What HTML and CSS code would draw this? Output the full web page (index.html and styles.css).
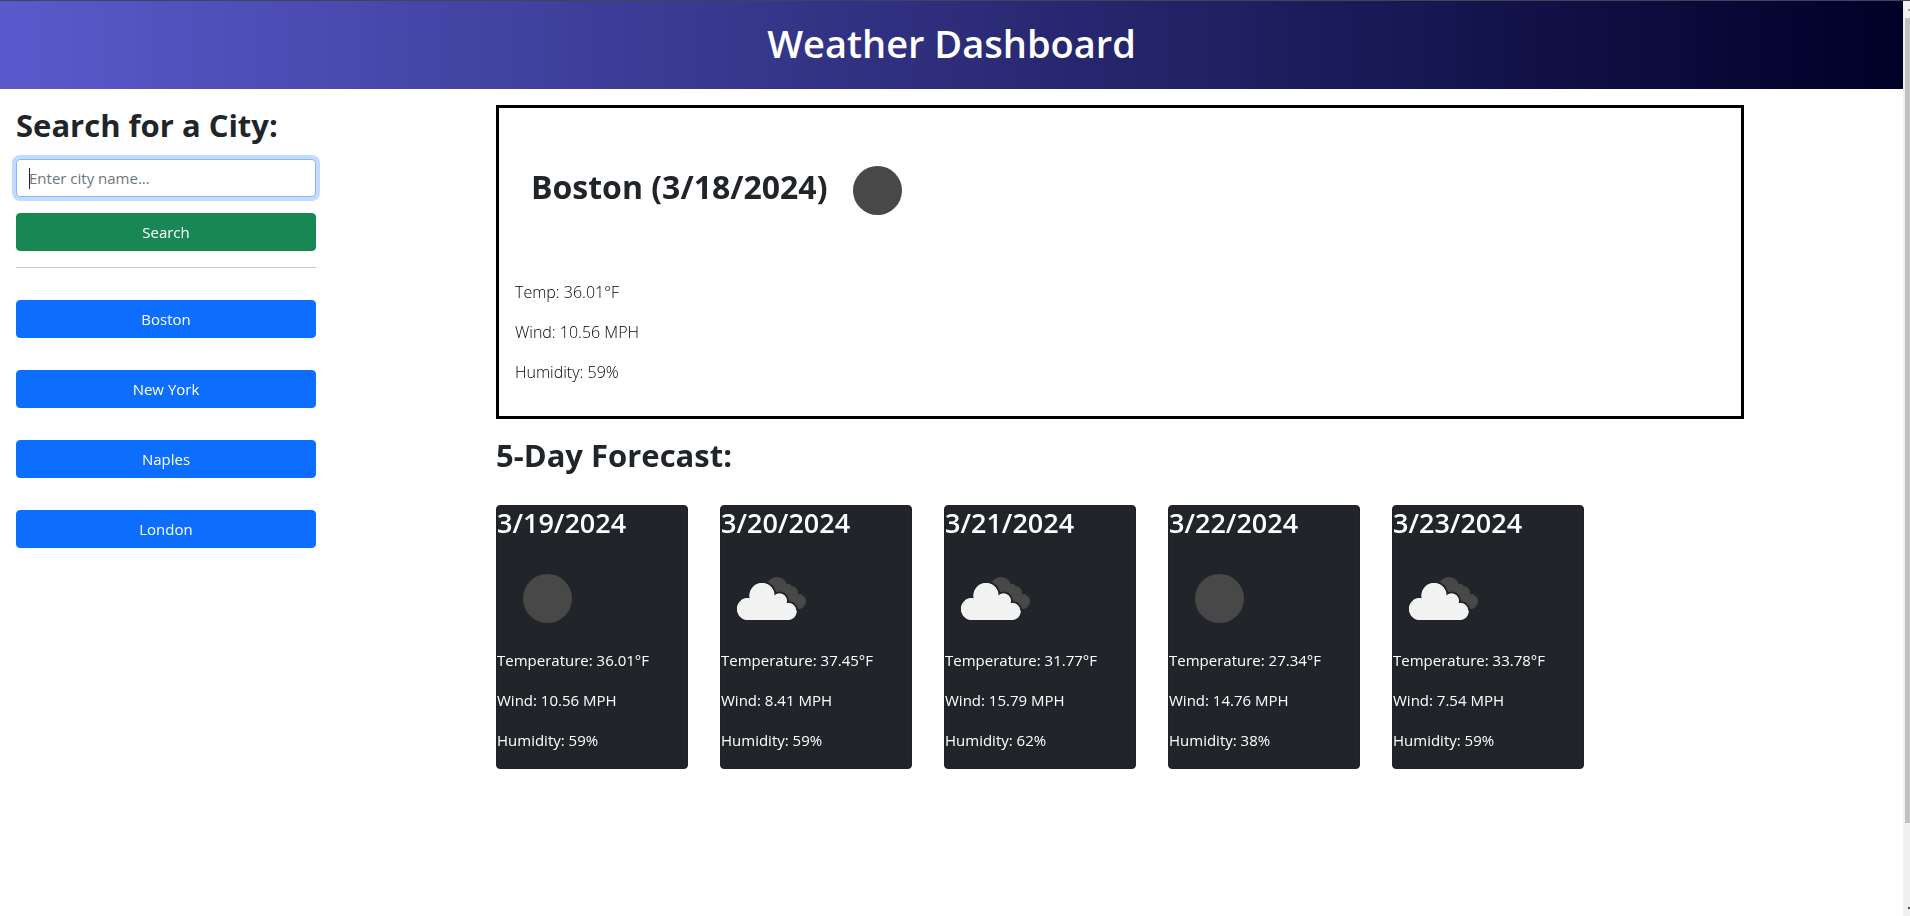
FILE: index.html
```html
<!DOCTYPE html>
<html lang="en">
<head>
<meta charset="utf-8">
<meta name="viewport" content="width=device-width, initial-scale=1">
<title>Weather Dashboard</title>
<link rel="stylesheet" href="styles.css">
</head>
<body>
<svg class="sprites" aria-hidden="true">
  <symbol id="clear-night" viewBox="0 0 100 100">
    <circle cx="50.500" cy="50.500" r="24.500" fill="#484849"/>
  </symbol>
  <symbol id="clouds" viewBox="0 0 100 100">
    <g fill="#484849">
      <circle cx="56" cy="39.500" r="10.500"/>
      <circle cx="70.500" cy="44.500" r="6.500"/>
      <circle cx="77.500" cy="53.500" r="7.500"/>
      <path d="M55 36h14l8 12-1 12.500H60z"/>
    </g>
    <g fill="#f2f2f2" stroke="#212529" stroke-width="2">
      <circle cx="27" cy="61" r="12"/>
      <circle cx="41" cy="47.500" r="13.500"/>
      <circle cx="58.500" cy="53" r="8.500"/>
      <circle cx="67" cy="63.500" r="9.500"/>
    </g>
    <g fill="#f2f2f2">
      <circle cx="27" cy="61" r="11"/>
      <circle cx="41" cy="47.500" r="12.500"/>
      <circle cx="58.500" cy="53" r="7.500"/>
      <circle cx="67" cy="63.500" r="8.500"/>
      <path d="M29.500 50l12-8 16 8 8 5 1.500 17H27z"/>
    </g>
  </symbol>
</svg>
<div class="window">
  <div class="page">
    <header class="banner"><h1>Weather Dashboard</h1></header>
    <div class="layout">
      <aside class="sidebar">
        <form class="search" action="#">
          <label class="heading" for="city">Search for a City:</label>
          <input id="city" class="field" type="text" placeholder="Enter city name..." autocomplete="off" autofocus>
          <button class="btn btn-search" type="submit">Search</button>
        </form>
        <hr class="rule">
        <div class="history">
          <button class="btn" type="button">Boston</button>
          <button class="btn" type="button">New York</button>
          <button class="btn" type="button">Naples</button>
          <button class="btn" type="button">London</button>
        </div>
      </aside>
      <main class="content">
        <section class="today">
          <div class="today-head">
            <h2 class="heading">Boston (3/18/2024)</h2>
            <svg class="icon" role="img" aria-label="Clear"><use href="#clear-night"/></svg>
          </div>
          <p>Temp: 36.01°F</p>
          <p>Wind: 10.56 MPH</p>
          <p>Humidity: 59%</p>
        </section>
        <h2 class="heading">5-Day Forecast:</h2>
        <div class="forecast">
          <article class="day">
            <h3>3/19/2024</h3>
            <svg class="icon" role="img" aria-label="Clear"><use href="#clear-night"/></svg>
            <p>Temperature: 36.01°F</p><p>Wind: 10.56 MPH</p><p>Humidity: 59%</p>
          </article>
          <article class="day">
            <h3>3/20/2024</h3>
            <svg class="icon" role="img" aria-label="Clouds"><use href="#clouds"/></svg>
            <p>Temperature: 37.45°F</p><p>Wind: 8.41 MPH</p><p>Humidity: 59%</p>
          </article>
          <article class="day">
            <h3>3/21/2024</h3>
            <svg class="icon" role="img" aria-label="Clouds"><use href="#clouds"/></svg>
            <p>Temperature: 31.77°F</p><p>Wind: 15.79 MPH</p><p>Humidity: 62%</p>
          </article>
          <article class="day">
            <h3>3/22/2024</h3>
            <svg class="icon" role="img" aria-label="Clear"><use href="#clear-night"/></svg>
            <p>Temperature: 27.34°F</p><p>Wind: 14.76 MPH</p><p>Humidity: 38%</p>
          </article>
          <article class="day">
            <h3>3/23/2024</h3>
            <svg class="icon" role="img" aria-label="Clouds"><use href="#clouds"/></svg>
            <p>Temperature: 33.78°F</p><p>Wind: 7.54 MPH</p><p>Humidity: 59%</p>
          </article>
        </div>
      </main>
    </div>
  </div>
  <div class="scroll-track" aria-hidden="true">
    <span class="arrow arrow-up"></span>
    <span class="thumb"></span>
    <span class="arrow arrow-down"></span>
  </div>
</div>
</body>
</html>
```
FILE: styles.css
```css
*, *::before, *::after { box-sizing: border-box; }

body {
  margin: 0;
  font: 400 15px/24px "Segoe UI", "Open Sans", "Noto Sans", sans-serif;
  color: #212529;
  background: #fff;
}

h1, h2, h3, p { margin: 0; }

.sprites { display: none; }

.window {
  display: flex;
  min-height: 100vh;
  border-top: 1px solid #42425a;
}

.page { flex: 1; min-width: 0; }

.banner {
  padding: 18px 16px 22px;
  text-align: center;
  color: #fff;
  background: linear-gradient(to right, #5a5acd, #000028);
}

.banner h1 {
  font-size: 38px;
  font-weight: 600;
  line-height: 48px;
}

.layout {
  display: flex;
  align-items: flex-start;
  gap: 180px;
  padding: 16px 159px 16px 16px;
}

.heading {
  padding-top: 2px;
  font-size: 31px;
  font-weight: 700;
  line-height: 36px;
}

.sidebar { flex: 0 0 300px; }

.search {
  display: flex;
  flex-direction: column;
  gap: 16px;
}

.field {
  width: 100%;
  height: 38px;
  padding: 6px 12px;
  font: inherit;
  color: #212529;
  background: #fff;
  border: 1px solid #86b7fe;
  border-radius: 4px;
  outline: 0;
  box-shadow: 0 0 0 4px #c2dbfe;
}

/* Steady caret while the field is empty */
.field:placeholder-shown {
  caret-color: transparent;
  background: linear-gradient(#212529, #212529) 12px center / 1px 21px no-repeat #fff;
}

.field::placeholder { color: #6c757d; opacity: 1; }

.btn {
  height: 38px;
  padding: 6px 12px;
  font: inherit;
  color: #fff;
  background: #0d6efd;
  border: 1px solid #0d6efd;
  border-radius: 4px;
  cursor: pointer;
}

.btn-search { background: #198754; border-color: #198754; }

.rule {
  height: 1px;
  margin: 16px 0 32px;
  border: 0;
  background: #c7c8c9;
}

.history {
  display: flex;
  flex-direction: column;
  gap: 32px;
}

.content { flex: 1; min-width: 0; }

.today {
  margin-bottom: 16px;
  padding: 16px;
  border: 3px solid #000;
  font-size: 16px;
  font-weight: 300;
  color: #000;
}

.today p, .day p { margin-bottom: 16px; }

.today-head {
  display: flex;
  align-items: center;
  margin-bottom: 24px;
  padding: 16px;
}

.today-head .heading {
  margin-bottom: 8px;
  font-size: 32px;
  color: #212529;
}

.icon { display: block; flex: none; width: 100px; height: 100px; }

.forecast {
  display: flex;
  flex-wrap: wrap;
  gap: 32px;
  margin-top: 32px;
}

.day {
  width: 192px;
  color: #fff;
  background: #212529;
  border: 1px solid #1e2125;
  border-radius: 4px;
}

.day h3 {
  margin-bottom: 8px;
  font-size: 27px;
  font-weight: 600;
  line-height: 34px;
}

.scroll-track {
  display: flex;
  flex-direction: column;
  flex: 0 0 7px;
  padding-left: 2px;
  background: #f0f0f0;
}

.thumb { flex: 0 0 88%; background: #c1c1c1; }

.arrow { display: flex; align-items: center; justify-content: flex-end; height: 17px; }
.arrow::before { content: ""; width: 2px; height: 2px; background: #a3a3a3; }
.arrow-down { margin-top: auto; }
.arrow-down::before { background: #505050; }
```
